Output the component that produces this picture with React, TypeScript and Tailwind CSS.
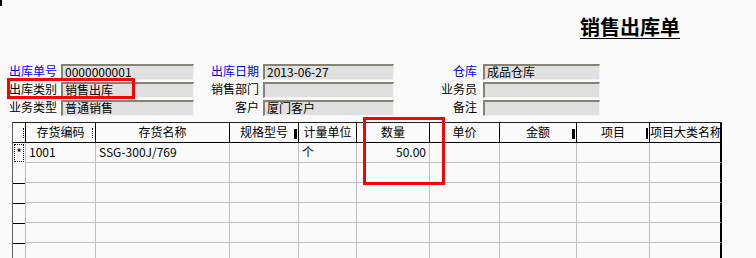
const font = { fontFamily: '"Noto Sans CJK SC", "Liberation Sans", sans-serif' };

const Input = ({ w, value }: { w: string; value?: string }) => (
  <div
    className={`${w} h-[16px] bg-[#e0e0e0] border-t-2 border-l-2 border-t-[#878373] border-l-[#878373] border-b border-r border-b-[#f5f3e6] border-r-[#f5f3e6] pl-[2px] text-[12px] leading-[12px] text-black whitespace-nowrap overflow-hidden`}
  >
    {value}
  </div>
);

const Label = ({ w, text, blue }: { w: string; text: string; blue?: boolean }) => (
  <div
    className={`${w} h-[16px] text-right text-[12px] leading-[14px] whitespace-nowrap ${
      blue ? "text-[#0000ff]" : "text-black"
    }`}
  >
    {text}
  </div>
);

const cols = [
  { w: "w-[13px]", label: "" },
  { w: "w-[70px]", label: "存货编码" },
  { w: "w-[134px]", label: "存货名称" },
  { w: "w-[69px]", label: "规格型号" },
  { w: "w-[58px]", label: "计量单位" },
  { w: "w-[73px]", label: "数量" },
  { w: "w-[70px]", label: "单价" },
  { w: "w-[77px]", label: "金额" },
  { w: "w-[73px]", label: "项目" },
  { w: "w-[72px]", label: "项目大类名称" },
];

const row1 = ["", "1001", "SSG-300J/769", "", "个", "50.00", "", "", "", ""];

export default function App() {
  return (
    <div className="relative w-[756px] h-[258px] overflow-hidden bg-[#fafafa] text-black" style={font}>
      <div className="absolute left-0 top-0 w-[2px] h-[6px] bg-black" />

      <div className="pt-[16px] pl-[580px] h-[38px] leading-[22px]">
        <span className="text-[20px] leading-[22px] font-bold underline underline-offset-[3px] decoration-[1px]">
          销售出库单
        </span>
      </div>

      <div className="mt-[26px] flex flex-col gap-[2px]">
        <div className="flex">
          <Label w="w-[61px] pr-[4px]" text="出库单号" blue />
          <Input w="w-[133px]" value="0000000001" />
          <Label w="w-[69px] pr-[4px]" text="出库日期" blue />
          <Input w="w-[131px]" value="2013-06-27" />
          <Label w="w-[89px] pr-[6px]" text="仓库" blue />
          <Input w="w-[117px]" value="成品仓库" />
        </div>
        <div className="flex">
          <Label w="w-[61px] pr-[4px]" text="出库类别" />
          <Input w="w-[133px]" value="销售出库" />
          <Label w="w-[69px] pr-[4px]" text="销售部门" />
          <Input w="w-[131px]" />
          <Label w="w-[89px] pr-[6px]" text="业务员" />
          <Input w="w-[117px]" />
        </div>
        <div className="flex">
          <Label w="w-[61px] pr-[4px]" text="业务类型" />
          <Input w="w-[133px]" value="普通销售" />
          <Label w="w-[69px] pr-[4px]" text="客户" />
          <Input w="w-[131px]" value="厦门客户" />
          <Label w="w-[89px] pr-[6px]" text="备注" />
          <Input w="w-[117px]" />
        </div>
      </div>

      <div className="mt-[6px] ml-[12px] w-[710px] border-t border-l border-t-[#202020] border-l-[#606060]">
        <div className="flex">
          {cols.map((c, i) => (
            <div
              key={i}
              className={`${c.w} relative h-[20px] border-b border-r border-black ${
                i === 9 ? "border-r-2" : ""
              } text-[12px] leading-[18px] text-center whitespace-nowrap overflow-hidden`}
            >
              {i === 0 ? (
                <div className="absolute right-[1px] top-[5px] h-[10px] border-r border-dotted border-black" />
              ) : (
                c.label
              )}
              {i === 1 && <div className="absolute right-[2px] top-[5px] h-[10px] border-r border-dotted border-black" />}
              {i === 3 && <div className="absolute right-[1px] top-[6px] w-[3px] h-[10px] bg-black" />}
              {i === 7 && <div className="absolute right-[1px] top-[6px] w-[3px] h-[10px] bg-black" />}
              {i === 8 && <div className="absolute right-[1px] top-[5px] w-[2px] h-[11px] bg-black" />}
            </div>
          ))}
        </div>
        {[0, 1, 2, 3, 4, 5].map((r) => (
          <div key={r} className="flex">
            {cols.map((c, i) =>
              i === 0 ? (
                <div key={i} className={`${c.w} relative h-[20px] border-r border-[#c0c0c0]`}>
                  {r === 0 && (
                    <div className="absolute inset-[1px] border border-dotted border-black text-[12px] leading-[16px] text-center">
                      *
                    </div>
                  )}
                  {r > 0 && <div className="absolute left-0 bottom-[-1px] w-[12px] h-[1px] bg-black" />}
                </div>
              ) : (
                <div
                  key={i}
                  className={`${c.w} h-[20px] border-b border-r ${
                    i === 9 ? "border-r-2 border-r-black border-b-[#c0c0c0]" : "border-[#c0c0c0]"
                  } text-[12px] leading-[18px] whitespace-nowrap overflow-hidden ${
                    i === 5 ? "text-right pr-[3px]" : "pl-[3px]"
                  }`}
                >
                  {r === 0 ? row1[i] : ""}
                </div>
              )
            )}
          </div>
        ))}
      </div>

      <div className="absolute left-[7px] top-[78px] w-[128px] h-[21px] border-[3px] border-[#ff0000]" />
      <div className="absolute left-[363px] top-[117px] w-[82px] h-[68px] border-[3px] border-[#ff0000]" />
    </div>
  );
}
